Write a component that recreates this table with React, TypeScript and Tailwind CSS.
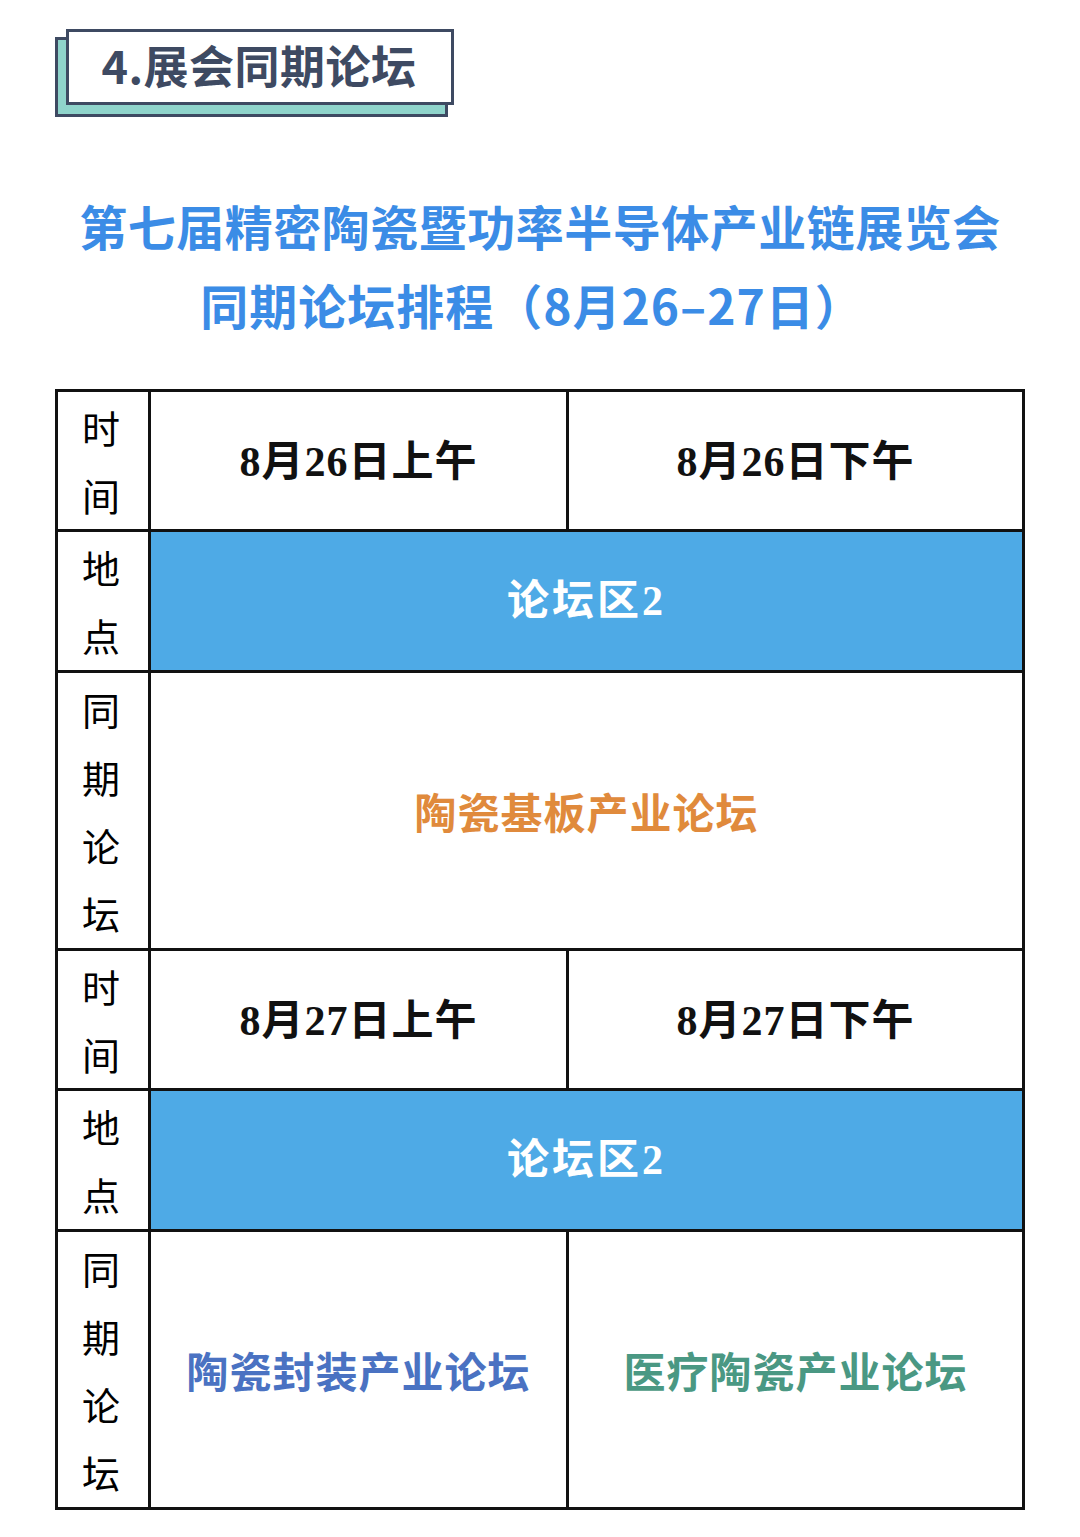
import React from 'react';

const cjk = "font-['Noto_Sans_CJK_SC',sans-serif]";
const dateFont = "font-['Liberation_Serif','Noto_Sans_CJK_SC',serif]";

function LabelCell({ chars }: { chars: string }) {
  return (
    <div className="bg-white flex items-center justify-center">
      <div className={`${cjk} text-[38px] leading-[68px] text-black flex flex-col items-center pr-[4px]`}>
        {chars.split('').map((c, i) => (
          <span key={i}>{c}</span>
        ))}
      </div>
    </div>
  );
}

function DateCell({ text }: { text: string }) {
  return (
    <div className="bg-white flex items-center justify-center pt-[3px]">
      <span className={`${dateFont} text-[42px] font-bold text-[#111] tracking-[1px]`}>{text}</span>
    </div>
  );
}

function PlaceCell() {
  return (
    <div className="col-span-2 bg-[#4eaae6] flex items-center justify-center">
      <span className={`${dateFont} text-[42px] font-bold text-white tracking-[3px]`}>论坛区2</span>
    </div>
  );
}

function ForumCell({ text, color, span }: { text: string; color: string; span?: boolean }) {
  return (
    <div className={`${span ? 'col-span-2' : ''} bg-white flex items-center justify-center`}>
      <span className={`${cjk} text-[42px] font-bold tracking-[1px] ${color}`}>{text}</span>
    </div>
  );
}

export default function App() {
  return (
    <div className="min-h-[1537px] w-[1080px] bg-white">
      {/* Section header */}
      <div className="pt-[29px] pl-[66px]">
        <div className="relative w-[388px] h-[76px]">
          <div className="absolute left-[-11px] top-[8px] w-[393px] h-[80px] bg-[#8fd4cb] border-[3px] border-[#3e4a62]" />
          <div className="relative z-10 w-full h-full bg-white border-[3px] border-[#3e4a62] flex items-center justify-center pb-[6px] pr-[2px]">
            <span className={`${cjk} text-[45px] font-bold text-[#3e4a62] leading-none tracking-[0.5px]`}>4.展会同期论坛</span>
          </div>
        </div>
      </div>

      {/* Title */}
      <div className={`${cjk} mt-[81px] text-center text-[48px] leading-[79px] font-bold text-[#3b8ce6] tracking-[0.5px]`}>
        <div>第七届精密陶瓷暨功率半导体产业链展览会</div>
        <div className="tracking-[1px] pr-[16px]">同期论坛排程（8月26–27日）</div>
      </div>

      {/* Schedule table */}
      <div className="mt-[45px] mx-[55px] bg-[#111] p-[3px] grid grid-cols-[90px_415px_453px] grid-rows-[137px_138px_275px_137px_138px_275px] gap-[3px]">
        <LabelCell chars="时间" />
        <DateCell text="8月26日上午" />
        <DateCell text="8月26日下午" />

        <LabelCell chars="地点" />
        <PlaceCell />

        <LabelCell chars="同期论坛" />
        <ForumCell text="陶瓷基板产业论坛" color="text-[#e08a3c]" span />

        <LabelCell chars="时间" />
        <DateCell text="8月27日上午" />
        <DateCell text="8月27日下午" />

        <LabelCell chars="地点" />
        <PlaceCell />

        <LabelCell chars="同期论坛" />
        <ForumCell text="陶瓷封装产业论坛" color="text-[#4a72c2]" />
        <ForumCell text="医疗陶瓷产业论坛" color="text-[#4a9883]" />
      </div>
    </div>
  );
}
